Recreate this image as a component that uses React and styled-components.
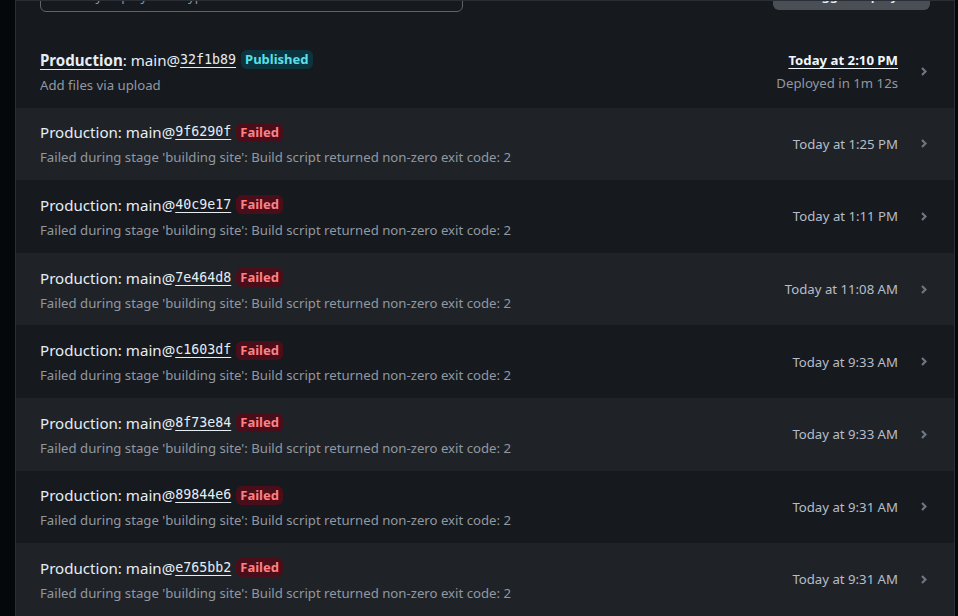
import styled, { createGlobalStyle } from "styled-components";

const GlobalStyle = createGlobalStyle`
  html, body {
    margin: 0;
    padding: 0;
    background: #05080b;
    overflow: hidden;
  }
  body {
    font-family: "Noto Sans", "Open Sans", sans-serif;
    color: #e6edf3;
  }
`;

const deployments = [
  { hash: "9f6290f", time: "Today at 1:25 PM" },
  { hash: "40c9e17", time: "Today at 1:11 PM" },
  { hash: "7e464d8", time: "Today at 11:08 AM" },
  { hash: "c1603df", time: "Today at 9:33 AM" },
  { hash: "8f73e84", time: "Today at 9:33 AM" },
  { hash: "89844e6", time: "Today at 9:31 AM" },
  { hash: "e765bb2", time: "Today at 9:31 AM" },
];

const FAIL_MSG =
  "Failed during stage 'building site': Build script returned non-zero exit code: 2";

const Chevron = () => (
  <svg width="6" height="9" viewBox="0 0 6 9">
    <polyline
      points="1,1 4.5,4.5 1,8"
      fill="none"
      stroke="#6e7681"
      strokeWidth="2.2"
    />
  </svg>
);

export default function App() {
  return (
    <>
      <GlobalStyle />
      <Page>
        <Sidebar />
        <Panel>
          <Toolbar>
            <SearchBox>Filter by deployment type</SearchBox>
            <Button>Trigger deploy</Button>
          </Toolbar>
          <List>
            <Row>
              <Info>
                <Title>
                  <strong>Production</strong>: main@<Hash>32f1b89</Hash>
                  <Badge $status="published">Published</Badge>
                </Title>
                <Sub>Add files via upload</Sub>
              </Info>
              <Meta>
                <Time $strong>Today at 2:10 PM</Time>
                <Sub>Deployed in 1m 12s</Sub>
              </Meta>
              <ChevronCell>
                <Chevron />
              </ChevronCell>
            </Row>
            {deployments.map((d, i) => (
              <Row key={d.hash} $alt={i % 2 === 0}>
                <Info>
                  <Title>
                    Production: main@<Hash>{d.hash}</Hash>
                    <Badge $status="failed">Failed</Badge>
                  </Title>
                  <Sub>{FAIL_MSG}</Sub>
                </Info>
                <Meta>
                  <Time>{d.time}</Time>
                </Meta>
                <ChevronCell>
                  <Chevron />
                </ChevronCell>
              </Row>
            ))}
          </List>
        </Panel>
      </Page>
    </>
  );
}

const Page = styled.div`
  display: flex;
  height: 616px;
`;

const Sidebar = styled.div`
  width: 15px;
  flex-shrink: 0;
  background: #05080b;
`;

const Panel = styled.main`
  width: 940px;
  flex-shrink: 0;
  box-sizing: border-box;
  background: #16191e;
  border: 1px solid #2a2f36;
  border-bottom: none;
  overflow: hidden;
`;

const Toolbar = styled.div`
  display: flex;
  justify-content: space-between;
  align-items: flex-start;
  padding: 0 24px;
  margin-top: -21px;
`;

const SearchBox = styled.div`
  width: 423px;
  height: 32px;
  box-sizing: border-box;
  border: 1px solid #5d646d;
  border-radius: 6px;
  padding: 0 12px;
  font-size: 13.2px;
  line-height: 30px;
  color: #8b949e;
`;

const Button = styled.div`
  width: 157px;
  height: 30px;
  box-sizing: border-box;
  border-radius: 6px;
  background: #4a4f56;
  font-size: 13.2px;
  font-weight: 600;
  line-height: 30px;
  text-align: center;
  color: #e6edf3;
`;

const List = styled.div`
  margin-top: 23px;
`;

const Row = styled.div`
  display: flex;
  align-items: center;
  height: 72.6px;
  box-sizing: border-box;
  padding: 0 27px 0 24px;
  background: ${(p) => (p.$alt ? "#1f2328" : "#16191e")};
`;

const Info = styled.div`
  flex: 1;
  min-width: 0;
`;

const Title = styled.div`
  display: flex;
  align-items: center;
  font-size: 15.1px;
  line-height: 24px;
  color: #e6edf3;
  white-space: pre;

  strong {
    font-weight: 700;
    text-decoration: underline;
    text-underline-offset: 3px;
  }
`;

const Hash = styled.span`
  font-family: "DejaVu Sans Mono", "Liberation Mono", monospace;
  font-size: 13.3px;
  text-decoration: underline;
  text-underline-offset: 3px;
`;

const Badge = styled.span`
  margin-left: 5px;
  padding: 0 4px;
  border-radius: 6px;
  font-size: 13px;
  font-weight: 700;
  line-height: 19px;
  background: ${(p) => (p.$status === "published" ? "#0b343f" : "#4a0e1b")};
  color: ${(p) => (p.$status === "published" ? "#5ae0e6" : "#ff8182")};
`;

const Sub = styled.div`
  margin-top: 3px;
  font-size: 13.2px;
  line-height: 20px;
  color: #9198a1;
  white-space: nowrap;
`;

const Meta = styled.div`
  text-align: right;
  white-space: nowrap;
`;

const Time = styled.div`
  font-size: 13.2px;
  line-height: 20px;
  color: ${(p) => (p.$strong ? "#f0f6fc" : "#b7bdc8")};
  font-weight: ${(p) => (p.$strong ? 700 : 400)};
  text-decoration: ${(p) => (p.$strong ? "underline" : "none")};
  text-underline-offset: 3px;
`;

const ChevronCell = styled.div`
  display: flex;
  align-items: center;
  margin-left: 23px;
  width: 6px;
`;
